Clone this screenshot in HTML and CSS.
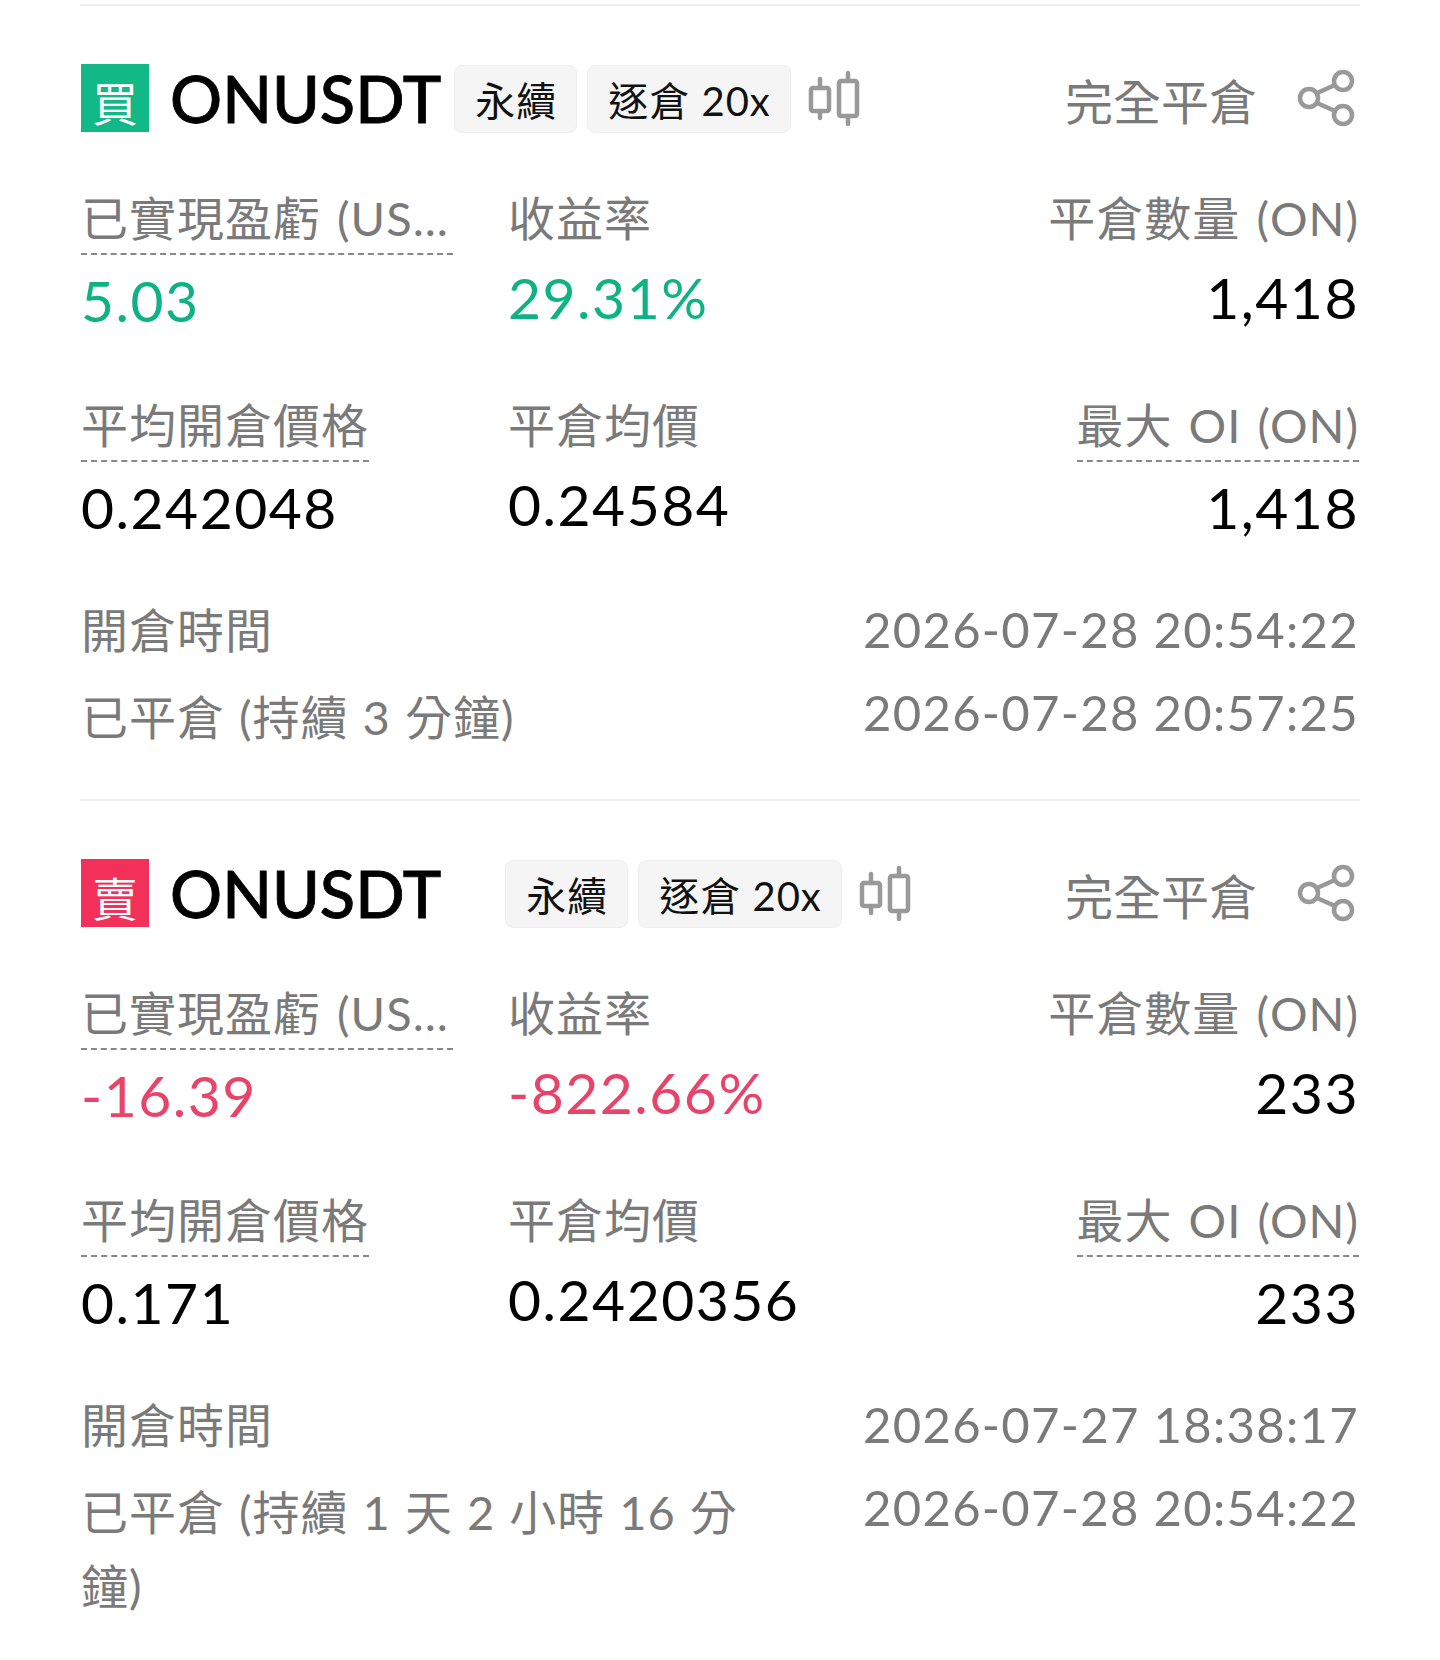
FILE: index.html
```html
<!DOCTYPE html>
<html lang="zh-Hant">
<head>
    <meta charset="UTF-8">
    <title>ONUSDT</title>
    <link rel="stylesheet" href="styles.css">
</head>
<body>
    <div class="card">
        <div class="card-head">
            <div class="side side-buy"><span>買</span></div>
            <div class="symbol">ONUSDT</div>
            <div class="tags">
                <span class="tag">永續</span>
                <span class="tag">逐倉 20x</span>
            </div>
            <svg class="candles" viewBox="0 0 56 60"><path d="M14 11v9M14 43v7M42 5v8M42 48v8"/><rect x="5" y="20" width="18" height="23" rx="2"/><rect x="33" y="13" width="18" height="35" rx="2"/></svg>
            <div class="head-right">
                <span class="close-type">完全平倉</span>
                <svg class="share" viewBox="0 0 60 60"><circle cx="46" cy="13" r="9"/><circle cx="12" cy="30" r="9"/><circle cx="46" cy="47" r="9"/><path d="M20 25l18-8M20 35l18 8"/></svg>
            </div>
        </div>
        <div class="metrics">
            <div class="cell">
                <div class="label dotted clip">已實現盈虧 (US...</div>
                <div class="value up">5.03</div>
            </div>
            <div class="cell mid">
                <div class="label">收益率</div>
                <div class="value up">29.31%</div>
            </div>
            <div class="cell end">
                <div class="label">平倉數量 (ON)</div>
                <div class="value">1,418</div>
            </div>
            <div class="cell">
                <div class="label dotted">平均開倉價格</div>
                <div class="value">0.242048</div>
            </div>
            <div class="cell mid">
                <div class="label">平倉均價</div>
                <div class="value">0.24584</div>
            </div>
            <div class="cell end">
                <div class="label dotted">最大 OI (ON)</div>
                <div class="value">1,418</div>
            </div>
        </div>
        <div class="times">
            <div class="time-row">
                <div class="time-label">開倉時間</div>
                <div class="time-value">2026-07-28 20:54:22</div>
            </div>
            <div class="time-row">
                <div class="time-label">已平倉 (持續 3 分鐘)</div>
                <div class="time-value">2026-07-28 20:57:25</div>
            </div>
        </div>
    </div>

    <div class="card">
        <div class="card-head">
            <div class="side side-sell"><span>賣</span></div>
            <div class="symbol">ONUSDT</div>
            <div class="tags tags-wide">
                <span class="tag">永續</span>
                <span class="tag">逐倉 20x</span>
            </div>
            <svg class="candles" viewBox="0 0 56 60"><path d="M14 11v9M14 43v7M42 5v8M42 48v8"/><rect x="5" y="20" width="18" height="23" rx="2"/><rect x="33" y="13" width="18" height="35" rx="2"/></svg>
            <div class="head-right">
                <span class="close-type">完全平倉</span>
                <svg class="share" viewBox="0 0 60 60"><circle cx="46" cy="13" r="9"/><circle cx="12" cy="30" r="9"/><circle cx="46" cy="47" r="9"/><path d="M20 25l18-8M20 35l18 8"/></svg>
            </div>
        </div>
        <div class="metrics">
            <div class="cell">
                <div class="label dotted clip">已實現盈虧 (US...</div>
                <div class="value down">-16.39</div>
            </div>
            <div class="cell mid">
                <div class="label">收益率</div>
                <div class="value down">-822.66%</div>
            </div>
            <div class="cell end">
                <div class="label">平倉數量 (ON)</div>
                <div class="value">233</div>
            </div>
            <div class="cell">
                <div class="label dotted">平均開倉價格</div>
                <div class="value">0.171</div>
            </div>
            <div class="cell mid">
                <div class="label">平倉均價</div>
                <div class="value">0.2420356</div>
            </div>
            <div class="cell end">
                <div class="label dotted">最大 OI (ON)</div>
                <div class="value">233</div>
            </div>
        </div>
        <div class="times">
            <div class="time-row">
                <div class="time-label">開倉時間</div>
                <div class="time-value">2026-07-27 18:38:17</div>
            </div>
            <div class="time-row">
                <div class="time-label">已平倉 (持續 1 天 2 小時 16 分鐘)</div>
                <div class="time-value">2026-07-28 20:54:22</div>
            </div>
        </div>
    </div>
</body>
</html>
```
FILE: styles.css
```css
body {
    margin: 0;
    padding: 0 80px;
    background: #fff;
    font-family: "Lato", "Noto Sans CJK TC", sans-serif;
    color: #000;
}

.card {
    margin-top: 4px;
    padding-top: 58px;
    min-height: 735px;
    border-top: 2px solid #eee;
}

.card + .card {
    margin-top: 0;
}

.card-head {
    display: flex;
    align-items: center;
    height: 68px;
}

.side {
    width: 68px;
    height: 68px;
    margin-left: 1px;
    flex: none;
    display: flex;
    align-items: flex-end;
    justify-content: center;
    color: #fff;
    font-size: 46px;
    line-height: 56px;
    overflow: hidden;
}

.side-buy {
    background: #12b886;
}

.side-sell {
    background: #f2305a;
}

.symbol {
    margin-left: 21px;
    font-size: 65px;
    font-weight: 500;
    line-height: 68px;
    -webkit-text-stroke: 0.8px #000;
}

.tags {
    display: flex;
    gap: 10px;
    margin-top: 2px;
    margin-left: 13px;
}

.tags-wide {
    margin-left: 64px;
}

.tag {
    height: 66px;
    padding: 0 19px 0 20px;
    display: flex;
    align-items: center;
    background: #f5f5f5;
    border: 1px solid #eee;
    border-radius: 8px;
    font-size: 40px;
    letter-spacing: 1px;
    color: #111;
}

.candles {
    width: 56px;
    height: 60px;
    margin-left: 15px;
    fill: none;
    stroke: #999;
    stroke-width: 4.5;
    stroke-linecap: round;
}

.head-right {
    margin-left: auto;
    display: flex;
    align-items: center;
    gap: 40px;
    padding-right: 3px;
}

.close-type {
    font-size: 48px;
    color: #7a7a7a;
    margin-top: 2px;
}

.share {
    width: 60px;
    height: 60px;
    fill: none;
    stroke: #999;
    stroke-width: 4.5;
}

.metrics {
    display: grid;
    grid-template-columns: 428px 1fr auto;
    row-gap: 59px;
    margin-top: 56px;
}

.cell {
    padding-left: 1px;
}

.cell.mid {
    padding-left: 0;
}

.cell.mid .value {
    margin-top: -2px;
}

.cell.end {
    text-align: right;
    padding-right: 1px;
}

.label {
    display: inline-block;
    height: 60px;
    font-size: 47px;
    letter-spacing: 1px;
    word-spacing: 3px;
    line-height: 60px;
    color: #7a7a7a;
    white-space: nowrap;
}

.dotted {
    border-bottom: 2px dashed #888;
    padding-bottom: 5px;
}

.clip {
    width: 372px;
}

.value {
    font-size: 57px;
    letter-spacing: 1.5px;
    line-height: 72px;
    margin-top: 9px;
}

.cell.end .label:not(.dotted) + .value,
.cell.mid .label + .value {
    margin-top: 13px;
}

.up {
    color: #0fb383;
}

.down {
    color: #e8446a;
}

.times {
    margin-top: 50px;
    padding: 0 1px;
}

.time-row {
    display: flex;
    justify-content: space-between;
    align-items: flex-start;
    margin-bottom: 13px;
}

.time-value {
    margin-top: 1px;
}

.time-row + .time-row .time-value {
    margin-top: -3px;
}

.time-label {
    width: 680px;
    font-size: 47px;
    letter-spacing: 1px;
    word-spacing: 1px;
    line-height: 74px;
    color: #7a7a7a;
}

.time-value {
    font-size: 49px;
    letter-spacing: 1.3px;
    line-height: 70px;
    color: #7a7a7a;
}
```
